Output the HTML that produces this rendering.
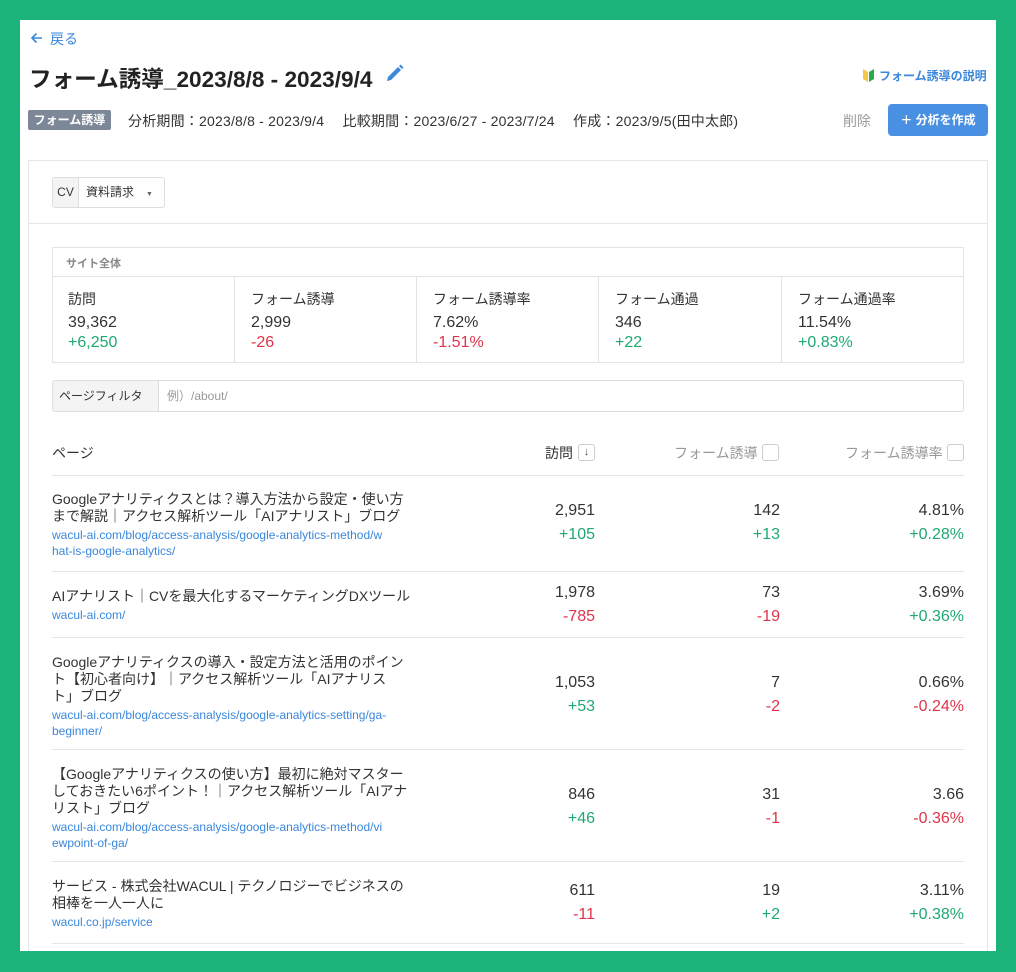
<!DOCTYPE html>
<html><head><meta charset="utf-8">
<style>
*{box-sizing:border-box;margin:0;padding:0}
body{width:1016px;height:972px;background:#1db47c;font-family:"Liberation Sans","Noto Sans CJK JP",sans-serif;color:#333;position:relative;overflow:hidden}
.a{position:absolute;white-space:nowrap}
#panel{position:absolute;left:20px;top:20px;width:976px;height:931px;background:#fff}
.blue{color:#3a87dc}
.g{color:#1fa971}.r{color:#e0334a}
.card{position:absolute;left:28px;top:160px;width:960px;height:800px;border:1px solid #e6e6e6}
.hl{position:absolute;left:52px;width:912px;height:1px;background:#e6e6e6}
.num{position:absolute;text-align:right;font-size:16px;line-height:24px}
.ttl{position:absolute;left:52px;font-size:14px;line-height:17px;color:#333;width:380px}
.url{font-size:12px;line-height:16px;color:#3a87dc;margin-top:2px}
.cell{position:absolute;top:277px;height:86px;width:182px;padding:12px 0 0 16px;font-size:16px;line-height:20px}
.cell .l{font-size:14px;margin-bottom:4px}
</style></head><body>
<div id="panel"></div>
<svg class="a" style="left:30px;top:31px" width="14" height="14" viewBox="0 0 14 14"><path d="M12 7H2M6.5 2.5L2 7l4.5 4.5" stroke="#3a87dc" stroke-width="1.6" fill="none"/></svg>
<div class="a blue" style="left:50px;top:29px;font-size:14px">戻る</div>
<div class="a" style="left:29px;top:61px;font-size:22.6px;font-weight:bold;color:#222">フォーム誘導_2023/8/8 - 2023/9/4</div>
<svg class="a" style="left:385px;top:64px" width="19" height="19" viewBox="0 0 19 19"><path d="M2 17l1-4 10-10 3 3-10 10z" fill="#3a87dc"/><path d="M14 2l1.5-1.5 3 3L17 5z" fill="#3a87dc"/></svg>
<svg class="a" style="left:862px;top:68px" width="13" height="14" viewBox="0 0 13 14"><path d="M1 1l5 3v10L1 11z" fill="#f5c842"/><path d="M12 1L7 4v10l5-3z" fill="#2aa84a"/></svg>
<div class="a blue" style="left:879px;top:67px;font-size:12px;font-weight:bold">フォーム誘導の説明</div>
<div class="a" style="left:28px;top:110px;width:83px;height:20px;background:#7c8797;color:#fff;font-size:12px;font-weight:bold;text-align:center;line-height:20px;border-radius:2px">フォーム誘導</div>
<div class="a" style="left:128px;top:111px;font-size:14px;color:#333;letter-spacing:0.2px">分析期間：2023/8/8 - 2023/9/4　 比較期間：2023/6/27 - 2023/7/24　 作成：2023/9/5(田中太郎)</div>
<div class="a" style="left:843px;top:111px;font-size:14px;color:#999">削除</div>
<div class="a" style="left:888px;top:104px;width:100px;height:32px;background:#4a90e2;border-radius:4px;color:#fff;font-size:12px;font-weight:bold;text-align:center;line-height:32px">＋ 分析を作成</div>

<div class="card"></div>
<div class="a" style="left:29px;top:223px;width:958px;height:1px;background:#e6e6e6"></div>
<div class="a" style="left:52px;top:177px;width:113px;height:31px;border:1px solid #ddd;border-radius:3px;font-size:12px;line-height:29px">
<span style="display:inline-block;width:26px;background:#f4f4f4;border-right:1px solid #ddd;text-align:center">CV</span><span style="margin-left:7px">資料請求</span><span style="margin-left:12px;font-size:7px;color:#666">▼</span></div>

<div class="a" style="left:52px;top:247px;width:912px;height:116px;border:1px solid #e3e3e3"></div>
<div class="a" style="left:53px;top:276px;width:910px;height:1px;background:#e3e3e3"></div>
<div class="a" style="left:66px;top:255px;font-size:11px;color:#888;font-weight:bold">サイト全体</div>
<div class="cell" style="left:52px"><div class="l">訪問</div>39,362<br><span class="g">+6,250</span></div>
<div class="cell" style="left:234px;border-left:1px solid #e3e3e3"><div class="l">フォーム誘導</div>2,999<br><span class="r">-26</span></div>
<div class="cell" style="left:416px;border-left:1px solid #e3e3e3"><div class="l">フォーム誘導率</div>7.62%<br><span class="r">-1.51%</span></div>
<div class="cell" style="left:598px;border-left:1px solid #e3e3e3"><div class="l">フォーム通過</div>346<br><span class="g">+22</span></div>
<div class="cell" style="left:781px;border-left:1px solid #e3e3e3"><div class="l">フォーム通過率</div>11.54%<br><span class="g">+0.83%</span></div>

<div class="a" style="left:52px;top:380px;width:912px;height:32px;border:1px solid #ddd;border-radius:3px;font-size:12px;line-height:30px">
<span style="display:inline-block;width:106px;background:#f4f4f4;border-right:1px solid #ddd;padding-left:6px">ページフィルタ</span><span style="margin-left:8px;color:#999">例）/about/</span></div>

<div class="a" style="left:52px;top:443px;font-size:14px">ページ</div>
<div class="a" style="left:545px;top:443px;font-size:14px">訪問</div>
<div class="a" style="left:578px;top:444px;width:17px;height:17px;border:1px solid #ccc;border-radius:3px;font-size:11px;text-align:center;line-height:15px;color:#555">↓</div>
<div class="a" style="left:674px;top:443px;font-size:14px;color:#999">フォーム誘導</div>
<div class="a" style="left:762px;top:444px;width:17px;height:17px;border:1px solid #ccc;border-radius:3px"></div>
<div class="a" style="left:845px;top:443px;font-size:14px;color:#999">フォーム誘導率</div>
<div class="a" style="left:947px;top:444px;width:17px;height:17px;border:1px solid #ccc;border-radius:3px"></div>
<div class="hl" style="top:475px"></div>

<div class="ttl" style="top:491px">Googleアナリティクスとは？導入方法から設定・使い方<br>まで解説｜アクセス解析ツール「AIアナリスト」ブログ<div class="url">wacul-ai.com/blog/access-analysis/google-analytics-method/w<br>hat-is-google-analytics/</div></div>
<div class="num" style="left:495px;width:100px;top:499px">2,951<br><span class="g">+105</span></div>
<div class="num" style="left:680px;width:100px;top:499px">142<br><span class="g">+13</span></div>
<div class="num" style="left:864px;width:100px;top:499px">4.81%<br><span class="g">+0.28%</span></div>
<div class="hl" style="top:571px"></div>

<div class="ttl" style="top:588px">AIアナリスト｜CVを最大化するマーケティングDXツール<div class="url">wacul-ai.com/</div></div>
<div class="num" style="left:495px;width:100px;top:581px">1,978<br><span class="r">-785</span></div>
<div class="num" style="left:680px;width:100px;top:581px">73<br><span class="r">-19</span></div>
<div class="num" style="left:864px;width:100px;top:581px">3.69%<br><span class="g">+0.36%</span></div>
<div class="hl" style="top:637px"></div>

<div class="ttl" style="top:654px">Googleアナリティクスの導入・設定方法と活用のポイン<br>ト【初心者向け】｜アクセス解析ツール「AIアナリス<br>ト」ブログ<div class="url">wacul-ai.com/blog/access-analysis/google-analytics-setting/ga-<br>beginner/</div></div>
<div class="num" style="left:495px;width:100px;top:671px">1,053<br><span class="g">+53</span></div>
<div class="num" style="left:680px;width:100px;top:671px">7<br><span class="r">-2</span></div>
<div class="num" style="left:864px;width:100px;top:671px">0.66%<br><span class="r">-0.24%</span></div>
<div class="hl" style="top:749px"></div>

<div class="ttl" style="top:766px">【Googleアナリティクスの使い方】最初に絶対マスター<br>しておきたい6ポイント！｜アクセス解析ツール「AIアナ<br>リスト」ブログ<div class="url">wacul-ai.com/blog/access-analysis/google-analytics-method/vi<br>ewpoint-of-ga/</div></div>
<div class="num" style="left:495px;width:100px;top:783px">846<br><span class="g">+46</span></div>
<div class="num" style="left:680px;width:100px;top:783px">31<br><span class="r">-1</span></div>
<div class="num" style="left:864px;width:100px;top:783px">3.66<br><span class="r">-0.36%</span></div>
<div class="hl" style="top:861px"></div>

<div class="ttl" style="top:878px">サービス - 株式会社WACUL | テクノロジーでビジネスの<br>相棒を一人一人に<div class="url">wacul.co.jp/service</div></div>
<div class="num" style="left:495px;width:100px;top:879px">611<br><span class="r">-11</span></div>
<div class="num" style="left:680px;width:100px;top:879px">19<br><span class="g">+2</span></div>
<div class="num" style="left:864px;width:100px;top:879px">3.11%<br><span class="g">+0.38%</span></div>
<div class="hl" style="top:943px"></div>

<div class="a" style="left:0;top:951px;width:1016px;height:21px;background:#1db47c"></div>
<div class="a" style="left:996px;top:0;width:20px;height:972px;background:#1db47c"></div>
</body></html>
